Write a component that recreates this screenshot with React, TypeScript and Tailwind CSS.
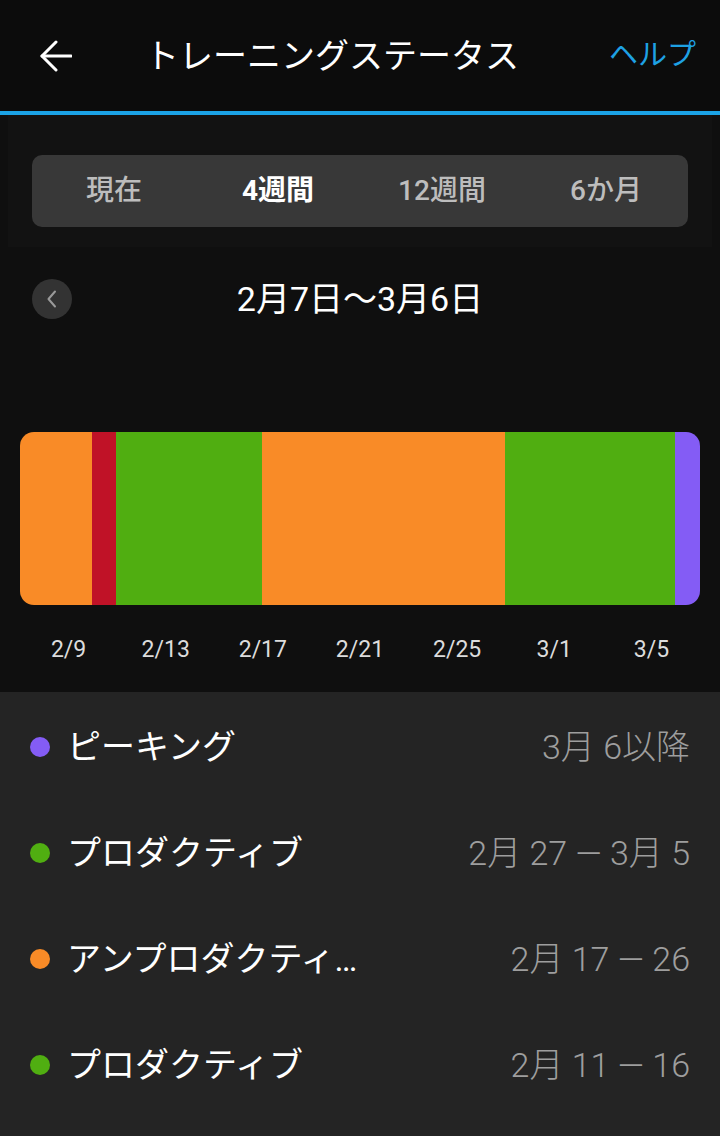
import React from "react";

const font = { fontFamily: '"Roboto", "Noto Sans CJK JP", sans-serif' };

const tabs = ["現在", "4週間", "12週間", "6か月"];
const segments = [
  { w: 72, color: "bg-[#f98b27]" },
  { w: 24, color: "bg-[#c01227]" },
  { w: 146, color: "bg-[#50ae11]" },
  { w: 243, color: "bg-[#f98b27]" },
  { w: 170, color: "bg-[#50ae11]" },
  { w: 25, color: "bg-[#845cf5]" },
];
const ticks = ["2/9", "2/13", "2/17", "2/21", "2/25", "3/1", "3/5"];
const rows = [
  { dot: "bg-[#845cf5]", name: "ピーキング", range: "3月 6以降" },
  { dot: "bg-[#50ae11]", name: "プロダクティブ", range: "2月 27 — 3月 5" },
  { dot: "bg-[#f98b27]", name: "アンプロダクティブ", range: "2月 17 — 26" },
  { dot: "bg-[#50ae11]", name: "プロダクティブ", range: "2月 11 — 16" },
];

export default function App() {
  return (
    <div className="w-[720px] h-[1136px] overflow-hidden bg-[#0f0f0f] flex flex-col" style={font}>
      {/* header */}
      <div className="h-[111px] bg-[#0c0c0c] flex items-center pl-[40px] pr-[24px]">
        <svg width="32" height="32" viewBox="0 0 32 32" fill="none" stroke="white" strokeWidth="3" strokeLinecap="round" strokeLinejoin="round">
          <path d="M2 16 H31" />
          <path d="M16 2 L2 16 L16 30" />
        </svg>
        <div className="ml-[73px] text-white text-[34px] leading-none">トレーニングステータス</div>
        <div className="ml-auto text-[#1ea1e4] text-[29px] leading-none">ヘルプ</div>
      </div>
      <div className="h-[4px] bg-[#1ba3e6]" />

      {/* period tabs */}
      <div className="mx-[8px] h-[132px] bg-[#121212] pt-[40px] px-[24px]">
        <div className="h-[72px] rounded-[10px] bg-[#383838] grid grid-cols-4 items-center">
          {tabs.map((t, i) => (
            <div
              key={t}
              className={
                "text-center text-[28px] leading-none " +
                (i === 1 ? "text-white font-bold" : "text-[#bdbdbd] font-medium")
              }
            >
              {t}
            </div>
          ))}
        </div>
      </div>

      {/* date range */}
      <div className="mt-[32px] h-[40px] px-[32px] flex items-center relative">
        <div className="w-[40px] h-[40px] rounded-full bg-[#333333] flex items-center justify-center">
          <svg width="12" height="18" viewBox="0 0 12 18" fill="none" stroke="#9a9a9a" strokeWidth="2" strokeLinecap="round" strokeLinejoin="round">
            <path d="M9 1.5 L2.5 9 L9 16.5" />
          </svg>
        </div>
        <div className="absolute left-0 right-0 text-center text-white text-[34px] leading-none pointer-events-none">
          2月7日〜3月6日
        </div>
      </div>

      {/* bar */}
      <div className="mt-[113px] mx-[20px] h-[173px] rounded-[14px] overflow-hidden flex">
        {segments.map((s, i) => (
          <div key={i} className={s.color + " h-full"} style={{ width: s.w }} />
        ))}
      </div>
      <div className="mx-[20px] h-[87px] grid grid-cols-7 items-center pt-[2px]">
        {ticks.map((t) => (
          <div key={t} className="text-center text-[#dcdcdc] text-[23px] leading-none">
            {t}
          </div>
        ))}
      </div>

      {/* legend list */}
      <div className="flex-1 bg-[#242424] pt-[2px]">
        {rows.map((r, i) => (
          <div key={i} className="h-[106px] flex items-center pl-[30px] pr-[30px]">
            <div className={"w-[20px] h-[20px] rounded-full shrink-0 " + r.dot} />
            <div className="ml-[17px] text-white text-[34px] leading-[1.3] max-w-[295px] truncate">{r.name}</div>
            <div className="ml-auto text-[#9e9e9e] text-[34px] leading-none font-light whitespace-nowrap">{r.range}</div>
          </div>
        ))}
      </div>
    </div>
  );
}
